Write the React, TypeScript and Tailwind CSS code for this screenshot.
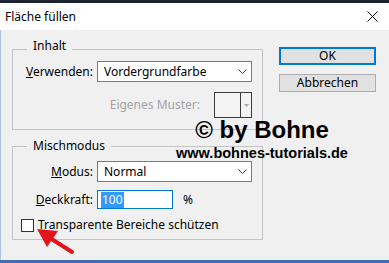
import React from 'react'

const Chevron: React.FC = () => (
  <svg width="9" height="5" viewBox="0 0 9 5" className="mr-[4px]">
    <path d="M0.5 0.5 L4.5 4.5 L8.5 0.5" fill="none" stroke="#404040" strokeWidth="1" />
  </svg>
)

const Select: React.FC<{ value: string }> = ({ value }) => (
  <div className="ml-[4px] flex h-[21px] w-[155px] items-center justify-between border border-[#7a7a7a] bg-white pl-[6px]">
    <span>{value}</span>
    <Chevron />
  </div>
)

export default function App() {
  return (
    <div className="relative flex h-[263px] w-[389px] flex-col overflow-hidden bg-[#f0f0f0] font-['Noto_Sans',sans-serif] text-[12px] leading-[16px] text-black">
      <div className="h-[3px] bg-[#1c2331]" />
      <div className="flex h-[27px] items-center justify-between bg-white pl-[5px] pr-[11px]">
        <span>Fläche füllen</span>
        <svg width="11" height="11" viewBox="0 0 11 11">
          <path d="M0.5 0.5 L10.5 10.5 M10.5 0.5 L0.5 10.5" stroke="#111" strokeWidth="1" />
        </svg>
      </div>

      <div className="flex flex-1 border-l border-[#a9c3e4] pl-[11px] pt-[8px]">
        <div className="w-[251px]">
          <fieldset className="border border-[#c4c4c4] pb-[11px] pt-[1px]">
            <legend className="ml-[14px] px-[6px] pb-[6px]">Inhalt</legend>
            <div className="flex items-center">
              <span className="w-[80px] text-right">
                <u>V</u>erwenden:
              </span>
              <Select value="Vordergrundfarbe" />
            </div>
            <div className="mt-[10px] flex items-center justify-end pr-[10px]">
              <span className="text-[#a3a3a3]">Eigenes Muster:</span>
              <div className="ml-[14px] flex h-[26px] w-[38px] border border-[#3c3c3c] bg-[#f3f3f3]">
                <div className="flex-1 border-r border-[#3c3c3c]" />
                <div className="flex w-[10px] items-center justify-center">
                  <svg width="5" height="3" viewBox="0 0 5 3">
                    <path d="M0 0 H5 L2.5 3 Z" fill="#a8a8a8" />
                  </svg>
                </div>
              </div>
            </div>
          </fieldset>

          <fieldset className="mt-[8px] border border-[#c4c4c4] pb-[6px] pt-[7px]">
            <legend className="ml-[14px] px-[6px]">Mischmodus</legend>
            <div className="flex items-center">
              <span className="w-[80px] text-right">
                <u>M</u>odus:
              </span>
              <Select value="Normal" />
            </div>
            <div className="mt-[8px] flex items-center">
              <span className="w-[80px] text-right">
                <u>D</u>eckkraft:
              </span>
              <div className="ml-[4px] flex h-[19px] w-[76px] items-center border border-[#0078d7] bg-white pl-[3px]">
                <span className="bg-[#3399ff] px-[1px] text-white">100</span>
              </div>
              <span className="ml-[10px]">%</span>
            </div>
            <div className="mt-[8px] flex h-[16px] items-center pl-[8px]">
              <div className="h-[13px] w-[13px] border border-[#333] bg-white" />
              <span className="ml-[4px]">
                <u>T</u>ransparente Bereiche schützen
              </span>
            </div>
          </fieldset>
        </div>

        <div className="ml-[16px] flex w-[97px] flex-col gap-[9px] pt-[9px]">
          <div className="flex h-[18px] items-center justify-center border-2 border-[#0078d7] bg-[#e1e1e1]">OK</div>
          <div className="flex h-[18px] items-center justify-center border border-[#adadad] bg-[#e1e1e1]">Abbrechen</div>
        </div>
      </div>

      <div className="h-[3px] bg-[#3f6fae]" />

      <div className="absolute left-[175px] top-[118px] w-[174px] whitespace-nowrap text-center font-['Liberation_Sans',Arial,sans-serif] font-bold text-black">
        <div className="text-[24px] leading-[24px]">© by Bohne</div>
        <div className="mt-[4px] text-[14.5px] leading-[14.5px]">www.bohnes-tutorials.de</div>
      </div>

      <svg className="absolute left-[32px] top-[222px]" width="44" height="34" viewBox="0 0 44 34">
        <path d="M40 30 L18 16" stroke="#e3141b" strokeWidth="4" strokeLinecap="round" />
        <path d="M5 7 L26 9 L15 25 Z" fill="#e3141b" />
      </svg>
    </div>
  )
}
